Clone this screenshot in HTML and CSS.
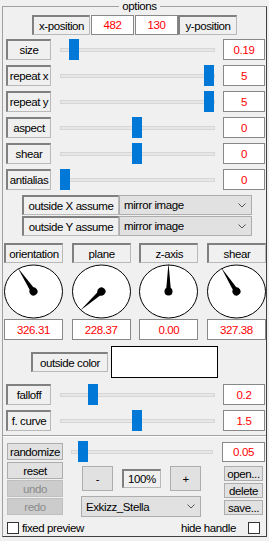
FILE: index.html
```html
<!DOCTYPE html>
<html>
<head>
<meta charset="utf-8">
<link rel="stylesheet" href="styles.css">
</head>
<body>
<div class="win">
  <div class="group">
    <div class="title">options</div>

    <div class="posrow">
      <div class="lab pos-l">x-position</div>
      <div class="val pos-v">482</div>
      <div class="val pos-v2">130</div>
      <div class="lab pos-r">y-position</div>
    </div>

    <div class="srow first">
      <div class="lab slab">size</div>
      <div class="slider"><div class="track"></div><div class="thumb" style="left:9px"></div></div>
      <div class="val sval">0.19</div>
    </div>
    <div class="srow">
      <div class="lab slab">repeat x</div>
      <div class="slider"><div class="track"></div><div class="thumb" style="left:144px"></div></div>
      <div class="val sval">5</div>
    </div>
    <div class="srow">
      <div class="lab slab">repeat y</div>
      <div class="slider"><div class="track"></div><div class="thumb" style="left:144px"></div></div>
      <div class="val sval">5</div>
    </div>
    <div class="srow">
      <div class="lab slab">aspect</div>
      <div class="slider"><div class="track"></div><div class="thumb" style="left:72px"></div></div>
      <div class="val sval">0</div>
    </div>
    <div class="srow">
      <div class="lab slab">shear</div>
      <div class="slider"><div class="track"></div><div class="thumb" style="left:72px"></div></div>
      <div class="val sval">0</div>
    </div>
    <div class="srow">
      <div class="lab slab">antialias</div>
      <div class="slider"><div class="track"></div><div class="thumb" style="left:0px"></div></div>
      <div class="val sval">0</div>
    </div>

    <div class="arow first">
      <div class="lab alab">outside X assume</div>
      <div class="combo acombo"><span>mirror image</span><svg class="chev" width="8" height="5" viewBox="0 0 8 5"><polyline points="0.5,0.5 4,4 7.5,0.5" fill="none" stroke="#555" stroke-width="1"/></svg></div>
    </div>
    <div class="arow">
      <div class="lab alab">outside Y assume</div>
      <div class="combo acombo"><span>mirror image</span><svg class="chev" width="8" height="5" viewBox="0 0 8 5"><polyline points="0.5,0.5 4,4 7.5,0.5" fill="none" stroke="#555" stroke-width="1"/></svg></div>
    </div>

    <div class="dials">
      <div class="dial">
        <div class="lab dlab">orientation</div>
        <svg class="face" width="59" height="56" viewBox="0 0 59 56">
          <ellipse cx="29.5" cy="28.5" rx="29" ry="26.5" fill="#fff" stroke="#000" stroke-width="1"/>
          <g transform="rotate(326.31 29.5 28.5)"><polygon points="29.5,0 27,28.5 32,28.5" fill="#000"/><circle cx="29.5" cy="28.5" r="4" fill="#000"/></g>
        </svg>
        <div class="val dval">326.31</div>
      </div>
      <div class="dial">
        <div class="lab dlab">plane</div>
        <svg class="face" width="59" height="56" viewBox="0 0 59 56">
          <ellipse cx="29.5" cy="28.5" rx="29" ry="26.5" fill="#fff" stroke="#000" stroke-width="1"/>
          <g transform="rotate(228.37 29.5 28.5)"><polygon points="29.5,0 27,28.5 32,28.5" fill="#000"/><circle cx="29.5" cy="28.5" r="4" fill="#000"/></g>
        </svg>
        <div class="val dval">228.37</div>
      </div>
      <div class="dial">
        <div class="lab dlab">z-axis</div>
        <svg class="face" width="59" height="56" viewBox="0 0 59 56">
          <ellipse cx="29.5" cy="28.5" rx="29" ry="26.5" fill="#fff" stroke="#000" stroke-width="1"/>
          <g transform="rotate(0 29.5 28.5)"><polygon points="29.5,0 27,28.5 32,28.5" fill="#000"/><circle cx="29.5" cy="28.5" r="4" fill="#000"/></g>
        </svg>
        <div class="val dval">0.00</div>
      </div>
      <div class="dial">
        <div class="lab dlab">shear</div>
        <svg class="face" width="59" height="56" viewBox="0 0 59 56">
          <ellipse cx="29.5" cy="28.5" rx="29" ry="26.5" fill="#fff" stroke="#000" stroke-width="1"/>
          <g transform="rotate(327.38 29.5 28.5)"><polygon points="29.5,0 27,28.5 32,28.5" fill="#000"/><circle cx="29.5" cy="28.5" r="4" fill="#000"/></g>
        </svg>
        <div class="val dval">327.38</div>
      </div>
    </div>

    <div class="colorrow">
      <div class="lab clab">outside color</div>
      <div class="swatch"></div>
    </div>

    <div class="srow first2">
      <div class="lab slab">falloff</div>
      <div class="slider"><div class="track"></div><div class="thumb" style="left:28px"></div></div>
      <div class="val sval">0.2</div>
    </div>
    <div class="srow">
      <div class="lab slab">f. curve</div>
      <div class="slider"><div class="track"></div><div class="thumb" style="left:72px"></div></div>
      <div class="val sval">1.5</div>
    </div>

    <div class="sep"></div>

    <div class="randrow">
      <div class="btn randbtn">randomize</div>
      <div class="slider rslider"><div class="track"></div><div class="thumb" style="left:7px"></div></div>
      <div class="val rval">0.05</div>
    </div>

    <div class="tools">
      <div class="col-left">
        <div class="btn lbtn">reset</div>
        <div class="btn lbtn dis">undo</div>
        <div class="btn lbtn dis">redo</div>
      </div>
      <div class="col-mid">
        <div class="zoomrow">
          <div class="btn zbtn">-</div>
          <div class="lab zval">100%</div>
          <div class="btn zbtn">+</div>
        </div>
        <div class="combo pcombo"><span>Exkizz_Stella</span><svg class="chev" width="8" height="5" viewBox="0 0 8 5"><polyline points="0.5,0.5 4,4 7.5,0.5" fill="none" stroke="#555" stroke-width="1"/></svg></div>
      </div>
      <div class="col-right">
        <div class="btn rbtn">open...</div>
        <div class="btn rbtn">delete</div>
        <div class="btn rbtn">save...</div>
      </div>
    </div>

    <div class="checkrow">
      <div class="check"></div>
      <span class="clabel">fixed preview</span>
      <span class="spacer"></span>
      <span class="clabel">hide handle</span>
      <div class="check right"></div>
    </div>
  </div>
</div>
</body>
</html>
```

FILE: styles.css
```css
* { box-sizing: border-box; }
html, body { margin: 0; padding: 0; }
body {
  width: 269px;
  height: 541px;
  overflow: hidden;
  background: #f0f0f0;
  font-family: "Liberation Sans", Arial, sans-serif;
  font-size: 11.5px;
  letter-spacing: -0.4px;
  color: #000;
}
.win {
  width: 269px;
  height: 541px;
  padding: 6px 2px 0 2px;
}
.group {
  height: 531px;
  border-top: 1px solid #a0a0a0;
  border-left: 1px solid #a0a0a0;
  border-right: 1px solid #404040;
  border-bottom: 1px solid #404040;
  display: flex;
  flex-direction: column;
}
.title {
  align-self: center;
  margin-top: -7px;
  margin-left: 10px;
  height: 13px;
  line-height: 13px;
  padding: 0 3px;
  background: #f0f0f0;
}
.lab {
  display: flex;
  align-items: center;
  justify-content: center;
  white-space: nowrap;
  background: #f0f0f0;
  border-top: 2px solid #808080;
  border-left: 2px solid #808080;
  border-right: 1px solid #b9b9b9;
  border-bottom: 1px solid #b9b9b9;
  height: 20px;
}
.val {
  display: flex;
  align-items: center;
  justify-content: center;
  background: #fff;
  border: 1px solid #888;
  color: #f00;
  height: 21px;
}
.posrow {
  display: flex;
  margin: 2px 0 0 29px;
}
.pos-l { width: 58px; }
.pos-v { width: 43px; margin-left: 1px; height: 20px; }
.pos-v2 { width: 43px; margin-left: 1px; height: 20px; }
.pos-r { width: 59px; }

.srow {
  display: flex;
  align-items: center;
  height: 21px;
  margin-top: 5px;
  padding-left: 3px;
}
.srow.first { margin-top: 4px; }
.srow.first2 { margin-top: 6px; }
.slab { width: 45px; height: 21px; }
.sval { width: 42px; margin-left: 8px; }
.slider {
  position: relative;
  width: 155px;
  height: 21px;
  margin-left: 9px;
}
.track {
  position: absolute;
  left: 0;
  right: 0;
  top: 9px;
  height: 4px;
  background: #e7e7e7;
  border: 1px solid #d6d6d6;
}
.thumb {
  position: absolute;
  top: 0;
  width: 10px;
  height: 21px;
  background: #0078d7;
}

.arow {
  display: flex;
  margin-top: 1px;
  padding-left: 19px;
}
.arow.first { margin-top: 5px; }
.alab { width: 97px; }
.combo {
  display: flex;
  align-items: center;
  justify-content: space-between;
  background: #e1e1e1;
  border: 1px solid #adadad;
  height: 20px;
  padding: 0 5px 0 4px;
}
.acombo { width: 133px; margin-left: 0; }

.dials {
  display: flex;
  justify-content: space-between;
  width: 262px;
  margin: 7px 0 0 1px;
}
.dial {
  width: 59px;
  display: flex;
  flex-direction: column;
}
.dlab { width: 59px; }
.face { display: block; overflow: visible; }
.dval { width: 59px; }

.colorrow {
  display: flex;
  align-items: center;
  margin-top: 6px;
  padding-left: 28px;
}
.clab { width: 77px; }
.swatch {
  width: 107px;
  height: 32px;
  margin-left: 3px;
  background: #fff;
  border: 1px solid #000;
}

.sep {
  margin-top: 4px;
  height: 2px;
  border-top: 1px solid #a0a0a0;
  border-bottom: 1px solid #fff;
}

.btn {
  display: flex;
  align-items: center;
  justify-content: center;
  background: #e1e1e1;
  border: 1px solid #adadad;
  white-space: nowrap;
}
.btn.dis {
  background: #cccccc;
  border-color: #bfbfbf;
  color: #8a8a8a;
}
.randrow {
  display: flex;
  align-items: center;
  height: 21px;
  margin-top: 4px;
  padding-left: 4px;
}
.randbtn { width: 56px; height: 17px; }
.rslider { width: 142px; margin-left: 8px; }
.rval { width: 43px; height: 20px; margin-left: 9px; }

.tools {
  display: flex;
  padding-left: 4px;
}
.col-left {
  width: 56px;
  display: flex;
  flex-direction: column;
  gap: 1px;
}
.lbtn { height: 17px; }
.col-mid {
  width: 120px;
  margin-left: 18px;
  margin-top: 4px;
  display: flex;
  flex-direction: column;
}
.zoomrow {
  display: flex;
  align-items: center;
  padding-left: 1px;
}
.zbtn { width: 31px; height: 25px; }
.zval { width: 40px; height: 19px; margin: 0 9px; }
.pcombo { width: 120px; height: 21px; margin-top: 5px; }
.col-right {
  width: 39px;
  margin-left: 23px;
  margin-top: 4px;
  display: flex;
  flex-direction: column;
  gap: 2px;
}
.rbtn { height: 15px; }

.checkrow {
  display: flex;
  align-items: center;
  margin-top: 4px;
  padding-left: 4px;
  padding-right: 6px;
  height: 13px;
}
.check {
  width: 12px;
  height: 12px;
  background: #fff;
  border: 1px solid #333;
}
.clabel { margin-left: 3px; }
.spacer { flex: 1; }
.check.right { margin-left: 12px; }
```
